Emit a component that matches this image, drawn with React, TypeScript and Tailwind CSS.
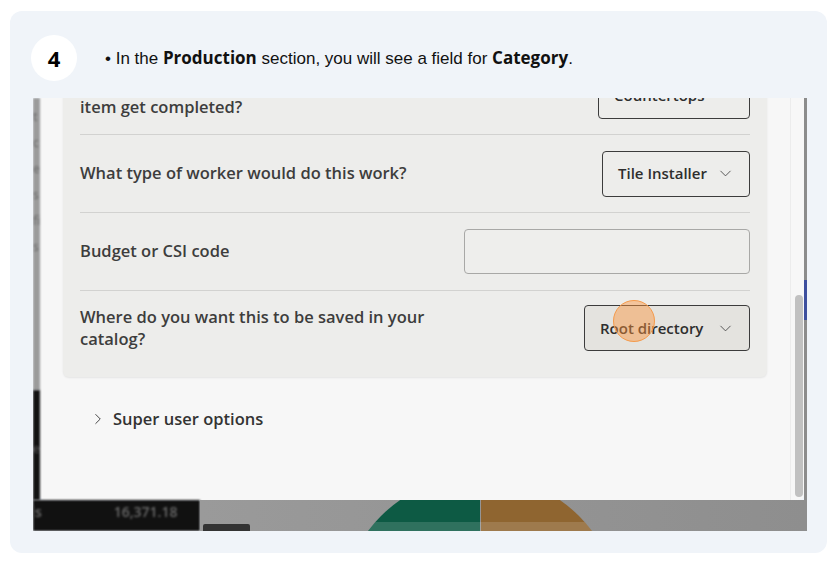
import { ChevronDown, ChevronRight } from "lucide-react";

const ui = { fontFamily: '"Open Sans", "Noto Sans", sans-serif' };

function Select({ label, className }: { label: string; className: string }) {
  return (
    <div className={`h-[46px] rounded-[4px] border border-[#3c3c3c] flex items-center justify-between pl-[15px] pr-[14px] text-[15px] font-semibold text-[#2e2e2e] ${className}`}>
      <span>{label}</span>
      <ChevronDown size={19} strokeWidth={1.1} className="text-[#444]" />
    </div>
  );
}

export default function App() {
  return (
    <div className="w-[837px] h-[565px] bg-white pt-[11px] px-[10px]">
      <div className="w-[817px] h-[542px] rounded-[12px] bg-[#f0f4f9] flex flex-col">
        {/* step header */}
        <div className="h-[87px] flex items-center pl-[21px] pt-[7px]">
          <div className="w-[46px] h-[46px] rounded-full bg-white flex items-center justify-center text-[22px] font-bold text-black" style={ui}>
            4
          </div>
          <p className="ml-[28px] text-[17px] text-[#111]" style={{ fontFamily: '"Liberation Sans", Arial, sans-serif' }}>
            • In the <b style={ui}>Production</b> section, you will see a field for <b style={ui}>Category</b>.
          </p>
        </div>

        {/* screenshot */}
        <div className="ml-[23px] w-[774px] h-[433px] flex flex-col overflow-hidden">
          <div className="h-[402px] flex">
            {/* left strip of app behind */}
            <div className="w-[7px] flex flex-col">
              <div className="h-[292px] bg-[#9b9b9b] text-[#6b6b6b] text-[12px] leading-[26px] blur-[1px] overflow-hidden pt-[6px]">
                <div>t</div><div>c</div><div>e</div><div>s</div><div>fi</div><div>s</div>
              </div>
              <div className="flex-1 bg-[#121212] text-[#555] text-[12px] blur-[1px] pt-[50px]">e</div>
            </div>

            {/* modal */}
            <div className="w-[764px] bg-[#f7f7f7] rounded-b-[6px] flex overflow-hidden" style={ui}>
              <div className="flex-1 pl-[23px]">
                <div className="w-[704px] -mt-[41px] bg-[#ededeb] rounded-b-[6px] shadow-[0_1px_2px_rgba(0,0,0,0.08)] px-[17px] text-[16.5px] font-semibold text-[#3d3d3d]">
                  <div className="h-[78px] flex items-center justify-between border-b border-[#d2d2d0]">
                    <p className="leading-[22px]">When should this line<br />item get completed?</p>
                    <Select label="Countertops" className="w-[152px]" />
                  </div>
                  <div className="h-[78px] flex items-center justify-between border-b border-[#d2d2d0]">
                    <p>What type of worker would do this work?</p>
                    <Select label="Tile Installer" className="w-[148px]" />
                  </div>
                  <div className="h-[78px] flex items-center justify-between border-b border-[#d2d2d0]">
                    <p>Budget or CSI code</p>
                    <div className="w-[286px] h-[45px] rounded-[4px] border border-[#a8a8a6] bg-[#eeeeec]" />
                  </div>
                  <div className="h-[86px] flex items-start justify-between pt-[14px]">
                    <p className="leading-[22px] mt-[1px]">Where do you want this to be saved in your<br />catalog?</p>
                    <div className="relative">
                      <Select label="Root directory" className="w-[166px] bg-[#e4e3df]" />
                      <div className="absolute left-[29px] top-[-5px] w-[42px] h-[42px] rounded-full bg-[rgba(251,146,60,0.45)] border border-[#f59a4a]" />
                    </div>
                  </div>
                </div>
                <div className="mt-[30px] pl-[26px] flex items-center gap-[6px] text-[16.5px] font-semibold text-[#333]">
                  <ChevronRight size={18} strokeWidth={1.2} />
                  <span>Super user options</span>
                </div>
              </div>
              {/* scrollbar */}
              <div className="w-[14px] border-l border-[#ececec] flex flex-col justify-end pb-[3px] items-center">
                <div className="w-[8px] h-[202px] rounded-full bg-[#c1c1c1] ml-[2px]" />
              </div>
            </div>

            {/* right strip */}
            <div className="w-[3px] flex flex-col bg-[#8c8c8c]">
              <div className="h-[182px]" />
              <div className="h-[40px] bg-[#3d4f9e]" />
            </div>
          </div>

          {/* bottom strip of app behind */}
          <div className="h-[31px] flex">
            <div className="w-[167px] bg-[#111] flex items-start pt-[1px] text-[14px] font-semibold text-[#6a6a6a] blur-[1px]" style={ui}>
              <span className="ml-[-2px]">ls</span>
              <span className="ml-[72px]">16,371.18</span>
            </div>
            <div className="flex-1 bg-gradient-to-r from-[#9a9a9a] to-[#8e8e8e] relative">
              <div className="absolute left-[3px] bottom-0 w-[47px] h-[7px] bg-[#333] rounded-t-[2px]" />
              <svg className="absolute left-0 top-0" width="607" height="31" viewBox="0 0 607 31">
                <clipPath id="pie">
                  <circle cx="280" cy="115" r="140" />
                </clipPath>
                <g clipPath="url(#pie)">
                  <rect x="130" y="-30" width="150" height="61" fill="#0d5a44" />
                  <rect x="281" y="-30" width="150" height="61" fill="#8f6530" />
                  <rect x="130" y="22" width="310" height="9" fill="rgba(255,255,255,0.14)" />
                </g>
              </svg>
            </div>
          </div>
        </div>
      </div>
    </div>
  );
}
